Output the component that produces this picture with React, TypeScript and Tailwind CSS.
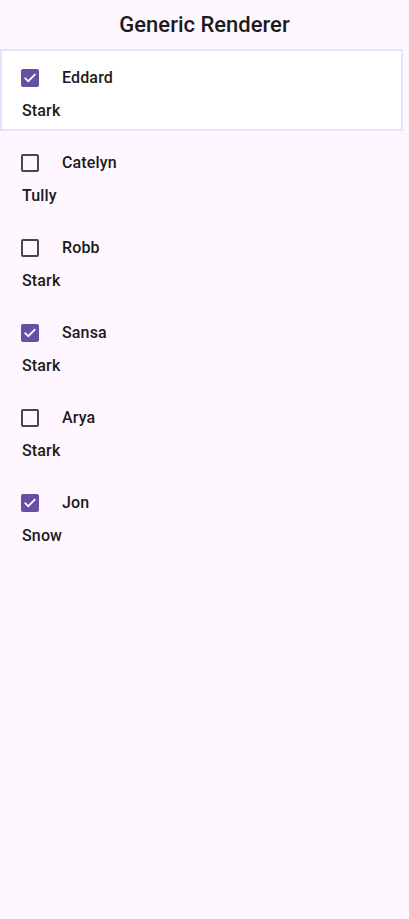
import React from "react";

const people = [
  { first: "Eddard", last: "Stark", checked: true, selected: true },
  { first: "Catelyn", last: "Tully", checked: false, selected: false },
  { first: "Robb", last: "Stark", checked: false, selected: false },
  { first: "Sansa", last: "Stark", checked: true, selected: false },
  { first: "Arya", last: "Stark", checked: false, selected: false },
  { first: "Jon", last: "Snow", checked: true, selected: false },
];

const Checkbox: React.FC<{ checked: boolean }> = ({ checked }) =>
  checked ? (
    <div className="w-[18px] h-[18px] rounded-[2px] bg-[#6750a4] flex items-center justify-center">
      <svg width="14" height="14" viewBox="0 0 24 24" fill="none">
        <path d="M4 12.5l5 5L20 6.5" stroke="#ffffff" strokeWidth="3" strokeLinecap="square" />
      </svg>
    </div>
  ) : (
    <div className="w-[18px] h-[18px] rounded-[2px] border-2 border-[#49454f]" />
  );

export default function App() {
  return (
    <div
      className="min-h-[919px] w-full bg-[#fef7ff] text-[#1d1b20]"
      style={{ fontFamily: "Roboto, 'Noto Sans', sans-serif" }}
    >
      {/* Header */}
      <header className="h-[49px] flex items-center justify-center">
        <h1 className="text-[22px] font-medium leading-[28px]">Generic Renderer</h1>
      </header>

      {/* List */}
      <ul className="w-[403px]">
        {people.map((p) => (
          <li
            key={p.first}
            className={
              p.selected
                ? "h-[82px] mb-[3px] border-2 border-[#ebe0fb] bg-white pl-[19px] pt-[9px]"
                : "h-[82px] mb-[3px] border-2 border-transparent pl-[19px] pt-[9px]"
            }
          >
            <div className="h-[36px] flex items-center">
              <Checkbox checked={p.checked} />
              <span className="ml-[23px] text-[16px] font-medium leading-[20px] tracking-[0.15px]">
                {p.first}
              </span>
            </div>
            <div className="mt-[5px] pl-[1px] text-[16px] font-medium leading-[20px] tracking-[0.15px]">
              {p.last}
            </div>
          </li>
        ))}
      </ul>
    </div>
  );
}
